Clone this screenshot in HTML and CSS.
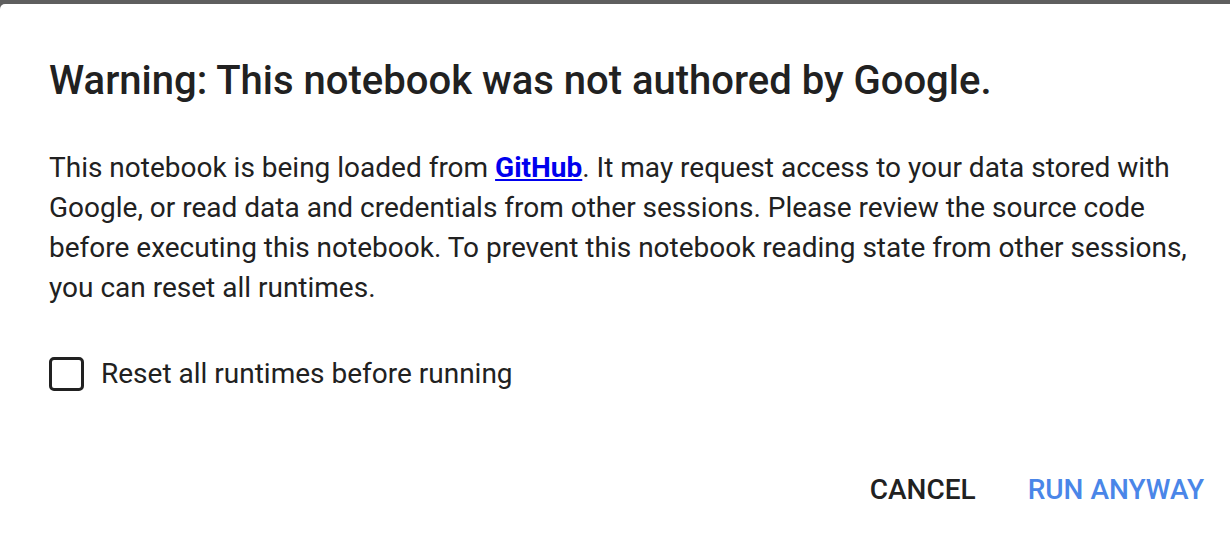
FILE: index.html
```html
<!DOCTYPE html>
<html lang="en">
<head>
<meta charset="utf-8">
<title>Warning</title>
<link rel="stylesheet" href="styles.css">
</head>
<body>
<div class="backdrop">
  <div class="dialog">
    <h1 class="title">Warning: This notebook was not authored by Google.</h1>
    <p class="message">This notebook is being loaded from <a class="link" href="#">GitHub</a>. It may request access to your data stored with Google, or read data and credentials from other sessions. Please review the source code before executing this notebook. To prevent this notebook reading state from other sessions, you can reset all runtimes.</p>
    <label class="check-row">
      <span class="checkbox"></span>
      <span class="check-label">Reset all runtimes before running</span>
    </label>
    <div class="actions">
      <button class="btn btn-cancel">CANCEL</button>
      <button class="btn btn-run">RUN ANYWAY</button>
    </div>
  </div>
</div>
</body>
</html>
```

FILE: styles.css
```css
html, body {
  margin: 0;
  padding: 0;
  width: 1230px;
  height: 540px;
  overflow: hidden;
  background: #5f5f5f;
}

.backdrop {
  padding-top: 4px;
  height: 540px;
  box-sizing: border-box;
}

.dialog {
  background: #ffffff;
  height: 100%;
  border-radius: 5px 0 0 0;
  padding: 0 26px 0 49px;
  box-sizing: border-box;
  font-family: Roboto, "Liberation Sans", sans-serif;
  color: #212121;
  display: flex;
  flex-direction: column;
}

.title {
  margin: 53px 0 0 0;
  font-size: 40px;
  line-height: 48px;
  font-weight: 500;
  color: #212121;
}

.message {
  margin: 43px 0 0 0;
  font-size: 28px;
  line-height: 40px;
  font-weight: 400;
}

.link {
  color: #0000ee;
  font-weight: 700;
  text-decoration: underline;
}

.check-row {
  margin-top: 48.6px;
  display: flex;
  align-items: center;
  gap: 17px;
}

.checkbox {
  width: 35px;
  height: 34px;
  box-sizing: border-box;
  border: 3.5px solid #212121;
  border-radius: 5px;
}

.check-label {
  font-size: 28px;
  line-height: 34px;
}

.actions {
  margin-top: 82.4px;
  display: flex;
  justify-content: flex-end;
  gap: 52px;
}

.btn {
  background: none;
  border: 0;
  padding: 0;
  font-family: Roboto, "Liberation Sans", sans-serif;
  font-size: 28px;
  font-weight: 500;
  line-height: 34px;
  cursor: pointer;
}

.btn-cancel {
  color: #212121;
}

.btn-run {
  color: #4a86e8;
}
```
